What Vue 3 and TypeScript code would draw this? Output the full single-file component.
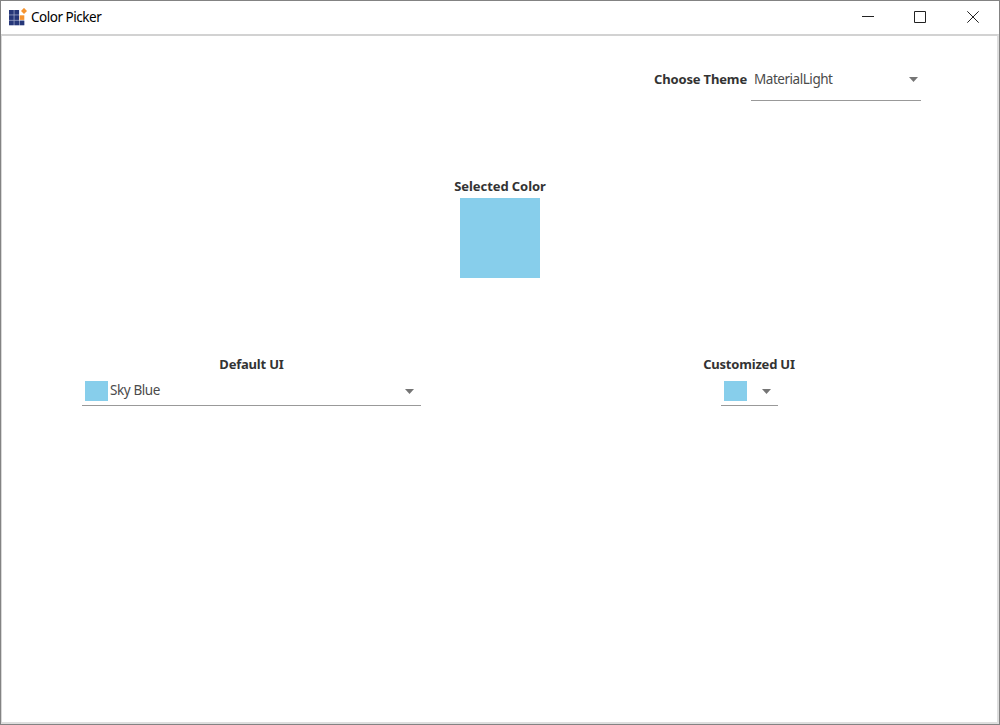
<script setup lang="ts">
import { ref } from 'vue'

const theme = ref('MaterialLight')
const colorName = ref('Sky Blue')
</script>

<template>
  <div class="window">
    <header class="titlebar">
      <svg class="logo" width="18" height="18" viewBox="0 0 18 18">
        <rect x="0" y="2" width="10.2" height="15.3" fill="#a9b0cf" />
        <rect x="10" y="12.7" width="5.2" height="4.6" fill="#a9b0cf" />
        <g fill="#263779">
          <rect x="0" y="2" width="4.7" height="4.6" /><rect x="5.4" y="2" width="4.6" height="4.6" />
          <rect x="0" y="7.3" width="4.7" height="4.6" /><rect x="5.4" y="7.3" width="4.6" height="4.6" />
          <rect x="0" y="12.6" width="4.7" height="4.6" /><rect x="5.4" y="12.6" width="4.6" height="4.6" />
          <rect x="10.7" y="12.6" width="4.6" height="4.6" />
        </g>
        <rect x="10.7" y="7.3" width="4.6" height="4.6" fill="#f5932f" />
        <path d="M15 -0.1 L18 2.9 L15 5.9 L12 2.9 Z" fill="#f5932f" />
      </svg>
      <span class="title">Color Picker</span>
      <div class="controls">
        <svg width="12" height="12" viewBox="0 0 12 12"><path d="M0 5.5H12" /></svg>
        <svg width="12" height="12" viewBox="0 0 12 12"><path d="M.5 .5H11.5V11.5H.5Z" /></svg>
        <svg width="12" height="12" viewBox="0 0 12 12"><path d="M.3 .3L11.7 11.7M11.7 .3L.3 11.7" /></svg>
      </div>
    </header>
    <main class="client">
      <section class="theme-row">
        <span class="label choose">Choose Theme</span>
        <div class="combo theme">
          <span class="value material">{{ theme }}</span>
          <svg class="arrow" width="9" height="5" viewBox="0 0 9 5"><path d="M0 0H9L4.5 5Z" /></svg>
        </div>
      </section>
      <section class="selected">
        <span class="label sel">Selected Color</span>
        <div class="big swatch"></div>
      </section>
      <section class="pickers">
        <div class="picker default">
          <span class="label def">Default UI</span>
          <div class="combo">
            <span class="swatch"></span>
            <span class="value sky">{{ colorName }}</span>
            <svg class="arrow" width="9" height="5" viewBox="0 0 9 5"><path d="M0 0H9L4.5 5Z" /></svg>
          </div>
        </div>
        <div class="picker custom">
          <span class="label cust">Customized UI</span>
          <div class="combo">
            <span class="swatch"></span>
            <svg class="arrow" width="9" height="5" viewBox="0 0 9 5"><path d="M0 0H9L4.5 5Z" /></svg>
          </div>
        </div>
      </section>
    </main>
  </div>
</template>

<style scoped>
.window {
  box-sizing: border-box;
  width: 1000px;
  height: 725px;
  border: 1px solid #838383;
  background: #fff;
  display: flex;
  flex-direction: column;
  font: 13px/18px "Noto Sans", "Open Sans", sans-serif;
  color: #333;
}
.titlebar { height: 33px; display: flex; align-items: center; padding: 0 20px 0 8px; }
.logo { margin: -1px 4px 0 0; }
.title { color: #000; font-size: 13.5px; letter-spacing: -0.47px; margin-top: -1px; }
.controls { display: flex; margin: -2px 0 0 auto; gap: 41px; }
.controls svg { fill: none; stroke: #222; stroke-width: 1; }
.controls svg:first-child { margin-right: -1px; }
.client {
  flex: 1;
  border-style: solid;
  border-width: 2px 2px 2px 1px;
  border-color: #d2d2d2 #dedede #dedede #d8d8d8;
  display: flex;
  flex-direction: column;
}
.label { font-weight: 700; white-space: nowrap; }
.value { color: #4b4b4b; font-size: 13.5px; white-space: nowrap; }
.choose { letter-spacing: -0.15px; margin-top: -2px; }
.material { letter-spacing: -0.46px; }
.theme-row { display: flex; justify-content: flex-end; align-items: center; margin-top: 22px; padding-right: 76px; height: 43px; gap: 4px; }
.combo { box-sizing: border-box; display: flex; align-items: center; border-bottom: 1px solid #999; padding: 0 7px 0 3px; }
.theme { width: 170px; height: 43px; padding-right: 3px; }
.arrow { margin-left: auto; fill: #757575; flex: none; }
.selected { display: flex; flex-direction: column; align-items: center; margin-top: 76px; }
.sel { letter-spacing: -0.08px; margin-left: 1px; }
.swatch { background: #87ceeb; width: 23px; height: 20px; flex: none; }
.big { width: 80px; height: 80px; margin-top: 3px; }
.pickers { display: flex; margin-top: 77px; padding: 0 77px 0 80px; justify-content: space-between; }
.picker { display: flex; flex-direction: column; align-items: center; }
.default { width: 339px; }
.def { letter-spacing: -0.2px; }
.cust { letter-spacing: -0.2px; }
.custom { width: 342px; }
.picker .combo { width: 100%; height: 29px; margin-top: 4px; }
.picker.custom .combo { width: 57px; }
.sky { margin: -2px 0 0 2px; letter-spacing: -0.4px; }
</style>
